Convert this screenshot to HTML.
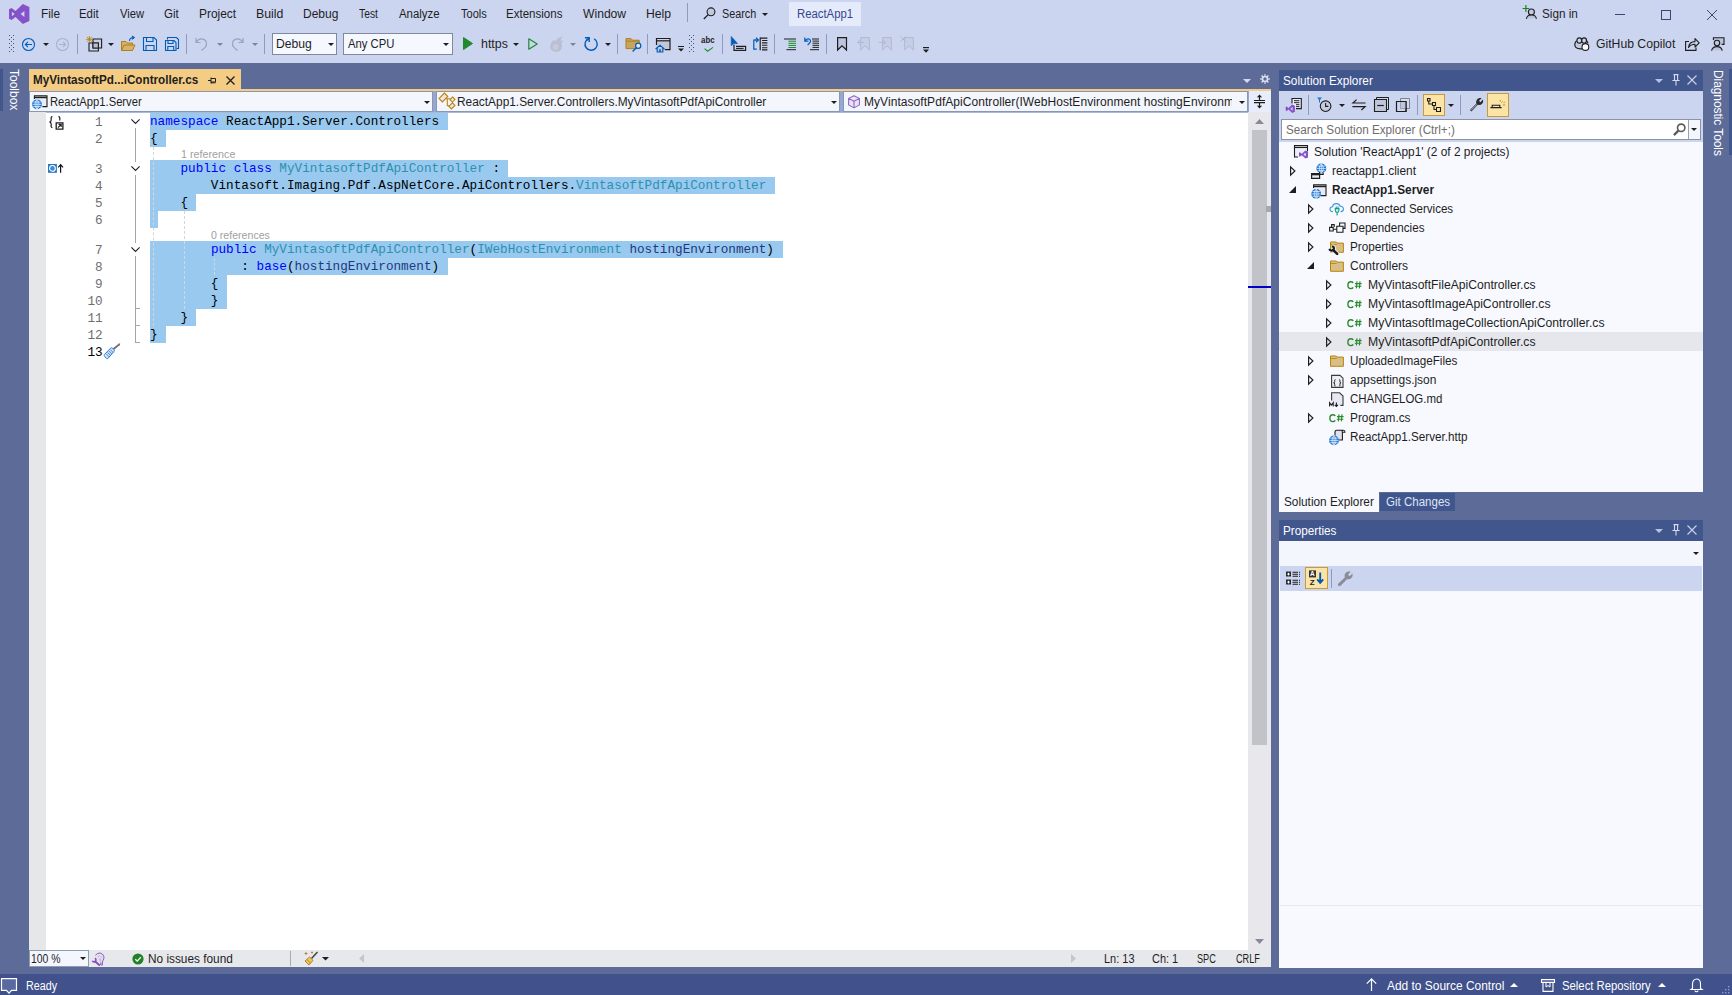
<!DOCTYPE html>
<html>
<head>
<meta charset="utf-8">
<title>ReactApp1</title>
<style>
*{box-sizing:border-box;margin:0;padding:0}
html,body{width:1732px;height:995px;overflow:hidden}
body{position:relative;background:#5d6b99;font-family:"Liberation Sans",sans-serif;font-size:12px;color:#1e1e1e}
.abs{position:absolute}
.t{position:absolute;white-space:pre;line-height:16px;height:16px}
svg{position:absolute;overflow:visible}
.kw{color:#0000ff}.ty{color:#2b91af}.pa{color:#1f377f}
.vt{position:absolute;writing-mode:vertical-rl;white-space:nowrap;color:#fff;font-size:12px;line-height:14px}
</style>
</head>
<body>
<div class="abs" style="left:0px;top:0px;width:1732px;height:63px;background:#ccd5f0;"></div>
<svg style="left:9px;top:4px" width="20.5" height="20" viewBox="0 0 20.5 20"><path d="M13.8 0 L20.4 2.9 V17.1 L13.8 20 L6.5 13 L2.6 16.1 L0 14.7 V5.3 L2.6 3.9 L6.5 7 Z M15.4 7.1 L11.6 10 L15.4 12.9 Z M2.9 7.8 V12.2 L5.7 10 Z" fill="#8652c9" fill-rule="evenodd"/></svg>
<div class="t" style="left:40.93px;top:6.0px;font-size:12px;color:#1e1e1e;transform:scaleX(0.9877);transform-origin:0 0;">File</div>
<div class="t" style="left:79.47px;top:6.0px;font-size:12px;color:#1e1e1e;transform:scaleX(0.9486);transform-origin:0 0;">Edit</div>
<div class="t" style="left:119.86px;top:6.0px;font-size:12px;color:#1e1e1e;transform:scaleX(0.9350);transform-origin:0 0;">View</div>
<div class="t" style="left:164.32px;top:6.0px;font-size:12px;color:#1e1e1e;transform:scaleX(0.9623);transform-origin:0 0;">Git</div>
<div class="t" style="left:198.92px;top:6.0px;font-size:12px;color:#1e1e1e;transform:scaleX(0.9948);transform-origin:0 0;">Project</div>
<div class="t" style="left:255.89px;top:6.0px;font-size:12px;color:#1e1e1e;transform:scaleX(1.0266);transform-origin:0 0;">Build</div>
<div class="t" style="left:302.92px;top:6.0px;font-size:12px;color:#1e1e1e;transform:scaleX(0.9996);transform-origin:0 0;">Debug</div>
<div class="t" style="left:358.67px;top:6.0px;font-size:12px;color:#1e1e1e;transform:scaleX(0.8587);transform-origin:0 0;">Test</div>
<div class="t" style="left:398.88px;top:6.0px;font-size:12px;color:#1e1e1e;transform:scaleX(0.9518);transform-origin:0 0;">Analyze</div>
<div class="t" style="left:460.66px;top:6.0px;font-size:12px;color:#1e1e1e;transform:scaleX(0.9190);transform-origin:0 0;">Tools</div>
<div class="t" style="left:505.95px;top:6.0px;font-size:12px;color:#1e1e1e;transform:scaleX(0.9618);transform-origin:0 0;">Extensions</div>
<div class="t" style="left:582.85px;top:6.0px;font-size:12px;color:#1e1e1e;transform:scaleX(1.0103);transform-origin:0 0;">Window</div>
<div class="t" style="left:645.90px;top:6.0px;font-size:12px;color:#1e1e1e;transform:scaleX(1.0169);transform-origin:0 0;">Help</div>
<div class="abs" style="left:687px;top:3px;width:1px;height:19px;background:#8e9bbc;"></div>
<svg style="left:703px;top:7px" width="13" height="13" viewBox="0 0 13 13"><circle cx="8" cy="4.8" r="3.9" fill="#c2c9e2" stroke="#1e1e1e" stroke-width="1.1"/><path d="M5.2 7.6 L0.8 12" stroke="#1e1e1e" stroke-width="1.3" fill="none"/></svg>
<div class="t" style="left:722.41px;top:6.0px;font-size:12px;color:#1e1e1e;transform:scaleX(0.9017);transform-origin:0 0;">Search</div>
<svg style="left:761.8px;top:12.6px" width="6" height="3.0" viewBox="0 0 6 3.0"><path d="M0 0H6 L3.0 3.0 Z" fill="#1e1e1e"/></svg>
<div class="abs" style="left:789px;top:2px;width:72px;height:24px;background:#e6ebfb;"></div>
<div class="t" style="left:797.47px;top:6.0px;font-size:12px;color:#33478f;transform:scaleX(0.9444);transform-origin:0 0;">ReactApp1</div>
<svg style="left:1522px;top:5px" width="15" height="15" viewBox="0 0 15 15"><circle cx="9.4" cy="7" r="3" fill="#c2c9e2" stroke="#1e1e1e" stroke-width="1.1"/><path d="M4.4 13.6 C4.8 11 6.6 10 9.4 10 S14 11 14.4 13.6 Z" fill="#bcc3dc"/><path d="M4.4 13.8 C4.8 11 6.6 10 9.4 10 S14 11 14.4 13.8" fill="none" stroke="#1e1e1e" stroke-width="1.1"/><path d="M3.9 0 V7 M0.6 3.5 H7.2" stroke="#15851f" stroke-width="1.2"/></svg>
<div class="t" style="left:1542.37px;top:6.0px;font-size:12px;color:#1e1e1e;transform:scaleX(0.9781);transform-origin:0 0;">Sign in</div>
<div class="abs" style="left:1615px;top:14px;width:10px;height:1px;background:#3c4478;"></div>
<div class="abs" style="left:1661px;top:10px;width:10px;height:10px;background:transparent;border:1px solid #3c4478;"></div>
<svg style="left:1707px;top:10px" width="10" height="10" viewBox="0 0 10 10"><path d="M0 0 L10 10 M10 0 L0 10" stroke="#3c4478" stroke-width="1" fill="none"/></svg>
<svg style="left:9px;top:35px" width="6" height="16" viewBox="0 0 6 16"><g fill="#47527a"><rect x="0" y="0" width="1" height="1"/><rect x="4" y="0" width="1" height="1"/><rect x="2" y="2" width="1" height="1"/><rect x="0" y="4" width="1" height="1"/><rect x="4" y="4" width="1" height="1"/><rect x="2" y="6" width="1" height="1"/><rect x="0" y="8" width="1" height="1"/><rect x="4" y="8" width="1" height="1"/><rect x="2" y="10" width="1" height="1"/><rect x="0" y="12" width="1" height="1"/><rect x="4" y="12" width="1" height="1"/><rect x="2" y="14" width="1" height="1"/><rect x="0" y="16" width="1" height="1"/><rect x="4" y="16" width="1" height="1"/></g></svg>
<svg style="left:22px;top:37.5px" width="13" height="13" viewBox="0 0 13 13"><circle cx="6.5" cy="6.5" r="6" fill="none" stroke="#005dba" stroke-width="1.1"/><path d="M10 6.5 H3.5 M6 3.8 L3.3 6.5 L6 9.2" fill="none" stroke="#005dba" stroke-width="1.1"/></svg>
<svg style="left:43px;top:43px" width="6" height="3.0" viewBox="0 0 6 3.0"><path d="M0 0H6 L3.0 3.0 Z" fill="#1e1e1e"/></svg>
<svg style="left:56px;top:37.5px" width="13" height="13" viewBox="0 0 13 13"><circle cx="6.5" cy="6.5" r="6" fill="none" stroke="#a9b1cc" stroke-width="1.1"/><path d="M3 6.5 H9.5 M7 3.8 L9.7 6.5 L7 9.2" fill="none" stroke="#a9b1cc" stroke-width="1.1"/></svg>
<div class="abs" style="left:77px;top:34px;width:1px;height:20px;background:#8e9bbc;"></div>
<svg style="left:86px;top:36px" width="16" height="16" viewBox="0 0 16 16"><path d="M7 3 H15.6 V12 H7 Z" fill="#c9cee0" stroke="#1e1e1e" stroke-width="1.1"/><path d="M3 7 H12.4 V15 H3 Z" fill="none" stroke="#1e1e1e" stroke-width="1.1"/><path d="M7 7 H12.4 V12 H7 Z" fill="#b9bfd4" stroke="#1e1e1e" stroke-width="1.1"/><path d="M3.4 0 V6.6 M0 3.3 H6.8 M1 0.9 L5.8 5.7 M5.8 0.9 L1 5.7" stroke="#b8860b" stroke-width="0.9"/></svg>
<svg style="left:108px;top:43px" width="6" height="3.0" viewBox="0 0 6 3.0"><path d="M0 0H6 L3.0 3.0 Z" fill="#1e1e1e"/></svg>
<svg style="left:121px;top:36px" width="16" height="16" viewBox="0 0 16 16"><path d="M0.5 14.5 V5.5 H5 L6.5 7 H11.5 V9" fill="#d8b265" stroke="#b07d1f"/><path d="M0.5 14.5 L3 9 H14 L11.5 14.5 Z" fill="#d8b265" stroke="#b07d1f"/><path d="M8.5 5 C8.5 2.5 10.5 1.5 13 1.5 M11 0 L13.2 1.5 L11 3.2" fill="none" stroke="#005dba" stroke-width="1.1"/></svg>
<svg style="left:143px;top:37px" width="14" height="14" viewBox="0 0 14 14"><path d="M0.5 0.5 H11 L13.5 3 V13.5 H0.5 Z" fill="none" stroke="#005dba" stroke-width="1.1"/><path d="M3.5 0.5 V4.5 H10 V0.5 M3 13.5 V8.5 H11 V13.5" fill="none" stroke="#005dba" stroke-width="1.1"/></svg>
<svg style="left:165px;top:37px" width="14" height="14" viewBox="0 0 14 14"><path d="M2.5 2.5 V0.5 H11.5 L13.5 2.5 V11.5 H11.5" fill="none" stroke="#005dba" stroke-width="1.1"/><path d="M0.5 3.5 H9 L11 5.5 V13.5 H0.5 Z" fill="none" stroke="#005dba" stroke-width="1.1"/><path d="M3 3.5 V6.5 H8 V3.5 M2.8 13.5 V9.5 H8.7 V13.5" fill="none" stroke="#005dba" stroke-width="1.1"/></svg>
<div class="abs" style="left:186px;top:34px;width:1px;height:20px;background:#8e9bbc;"></div>
<svg style="left:195px;top:37px" width="13" height="14" viewBox="0 0 13 14"><path d="M1 1 V5.5 H5.5 M1.2 5.3 C3 2.5 6 1.2 8.8 2.4 C12 3.8 12.4 8 10 10.4 L6.5 13.5" fill="none" stroke="#9ca2b8" stroke-width="1.2"/></svg>
<svg style="left:217px;top:43px" width="6" height="3.0" viewBox="0 0 6 3.0"><path d="M0 0H6 L3.0 3.0 Z" fill="#7d8398"/></svg>
<svg style="left:231px;top:37px" width="13" height="14" viewBox="0 0 13 14"><path d="M12 1 V5.5 H7.5 M11.8 5.3 C10 2.5 7 1.2 4.2 2.4 C1 3.8 0.6 8 3 10.4 L6.5 13.5" fill="none" stroke="#9ca2b8" stroke-width="1.2"/></svg>
<svg style="left:252px;top:43px" width="6" height="3.0" viewBox="0 0 6 3.0"><path d="M0 0H6 L3.0 3.0 Z" fill="#7d8398"/></svg>
<div class="abs" style="left:264px;top:34px;width:1px;height:20px;background:#8e9bbc;"></div>
<div class="abs" style="left:272px;top:33px;width:65px;height:22px;background:#f5f8fe;border:1px solid #7f889e;"></div>
<div class="t" style="left:275.90px;top:36.0px;font-size:12px;color:#1e1e1e;transform:scaleX(1.0145);transform-origin:0 0;">Debug</div>
<svg style="left:327.5px;top:43px" width="6" height="3.0" viewBox="0 0 6 3.0"><path d="M0 0H6 L3.0 3.0 Z" fill="#1e1e1e"/></svg>
<div class="abs" style="left:343px;top:33px;width:110px;height:22px;background:#f5f8fe;border:1px solid #7f889e;"></div>
<div class="t" style="left:348.38px;top:36.0px;font-size:12px;color:#1e1e1e;transform:scaleX(0.9420);transform-origin:0 0;">Any CPU</div>
<svg style="left:443px;top:43px" width="6" height="3.0" viewBox="0 0 6 3.0"><path d="M0 0H6 L3.0 3.0 Z" fill="#1e1e1e"/></svg>
<svg style="left:463px;top:37px" width="10" height="13" viewBox="0 0 10 13"><path d="M0.5 0.5 L9.5 6.5 L0.5 12.5 Z" fill="#1f8a2d" stroke="#1f8a2d" stroke-linejoin="round"/></svg>
<div class="t" style="left:480.54px;top:36.0px;font-size:12px;color:#1e1e1e;transform:scaleX(1.0341);transform-origin:0 0;">https</div>
<svg style="left:513px;top:43px" width="6" height="3.0" viewBox="0 0 6 3.0"><path d="M0 0H6 L3.0 3.0 Z" fill="#1e1e1e"/></svg>
<svg style="left:528px;top:38px" width="10" height="12" viewBox="0 0 10 12"><path d="M0.8 0.8 L9.2 6 L0.8 11.2 Z" fill="none" stroke="#1f8a2d" stroke-width="1.2" stroke-linejoin="round"/></svg>
<svg style="left:550px;top:36px" width="14" height="16" viewBox="0 0 14 16"><path d="M13.2 0.2 C10 0.6 6.5 3 5.5 5.5 C4.8 5 4.4 4.4 4.2 3.8 C1.8 5.6 0.2 8.2 0.2 10.8 C0.2 13.6 2.6 15.8 6 15.8 C9.6 15.8 12 13.4 12 10.4 C12 9 11.6 8 11.4 7 C12 6.4 12.8 5.4 13.4 4.2 C12.4 4.8 11.4 5 10.6 5 C10.6 3.2 11.6 1.4 13.2 0.2 Z" fill="#b9bed0"/><circle cx="5.6" cy="11" r="3" fill="#c6cade"/></svg>
<svg style="left:570px;top:43px" width="6" height="3.0" viewBox="0 0 6 3.0"><path d="M0 0H6 L3.0 3.0 Z" fill="#7d8398"/></svg>
<svg style="left:584px;top:37px" width="14" height="14" viewBox="0 0 14 14"><path d="M4.6 1.6 A6.1 6.1 0 1 0 10.2 1.9" fill="none" stroke="#005dba" stroke-width="1.4"/><path d="M0.9 0.7 H5.2 V5" fill="none" stroke="#005dba" stroke-width="1.4"/><path d="M5.2 0.7 L2.6 3.4" fill="none" stroke="#005dba" stroke-width="1.4"/></svg>
<svg style="left:605px;top:43px" width="6" height="3.0" viewBox="0 0 6 3.0"><path d="M0 0H6 L3.0 3.0 Z" fill="#1e1e1e"/></svg>
<div class="abs" style="left:617px;top:34px;width:1px;height:20px;background:#8e9bbc;"></div>
<svg style="left:625px;top:37px" width="17" height="15" viewBox="0 0 17 15"><path d="M1 1.6 H6 L7.4 3.2 H14.2 V11.6 H1 Z" fill="#c9a45c" stroke="#b07d1f" stroke-width="1"/><path d="M1 4.2 H14.2" stroke="#b07d1f" stroke-width="0.9"/><circle cx="13.2" cy="8.8" r="2.6" fill="#dfe6f8" stroke="#005dba" stroke-width="1.2"/><path d="M11.3 10.7 L7.6 14.4" stroke="#005dba" stroke-width="1.4"/></svg>
<div class="abs" style="left:647px;top:34px;width:1px;height:20px;background:#8e9bbc;"></div>
<svg style="left:655px;top:37px" width="16" height="16" viewBox="0 0 16 16"><path d="M1.5 4 H15 V12.6 H1.5 Z" fill="#c3c8d9"/><path d="M1.5 8 V1.5 H15 V12.6 H9.8" fill="none" stroke="#1e1e1e" stroke-width="1.2"/><path d="M1.5 3.8 H15" stroke="#1e1e1e" stroke-width="1.2"/><path d="M0.6 12 L5 8.2 L9.4 12 M2.2 11 V15 H7.8 V11" fill="#ccd5f0" stroke="#005dba" stroke-width="1.2"/><path d="M4.4 15 V12.6 H5.6 V15" fill="none" stroke="#005dba" stroke-width="0.9"/></svg>
<svg style="left:678px;top:46px" width="6" height="6" viewBox="0 0 6 6"><path d="M0 0.5 H6" stroke="#1e1e1e"/><path d="M0 2.5 H6 L3 5.5 Z" fill="#1e1e1e"/></svg>
<svg style="left:689px;top:35px" width="6" height="16" viewBox="0 0 6 16"><g fill="#47527a"><rect x="0" y="0" width="1" height="1"/><rect x="4" y="0" width="1" height="1"/><rect x="2" y="2" width="1" height="1"/><rect x="0" y="4" width="1" height="1"/><rect x="4" y="4" width="1" height="1"/><rect x="2" y="6" width="1" height="1"/><rect x="0" y="8" width="1" height="1"/><rect x="4" y="8" width="1" height="1"/><rect x="2" y="10" width="1" height="1"/><rect x="0" y="12" width="1" height="1"/><rect x="4" y="12" width="1" height="1"/><rect x="2" y="14" width="1" height="1"/><rect x="0" y="16" width="1" height="1"/><rect x="4" y="16" width="1" height="1"/></g></svg>
<div class="t" style="left:701.17px;top:32.0px;font-size:8.5px;color:#1e1e1e;transform:scaleX(0.9256);transform-origin:0 0;font-weight:bold;">abc</div>
<svg style="left:703.5px;top:46.5px" width="10" height="5" viewBox="0 0 10 5"><path d="M0.6 1.6 L3.6 4.2 L9 0.4" fill="none" stroke="#1f8a2d" stroke-width="1.1"/></svg>
<div class="abs" style="left:722px;top:34px;width:1px;height:20px;background:#8e9bbc;"></div>
<svg style="left:730px;top:36px" width="16" height="16" viewBox="0 0 16 16"><path d="M1.2 0.4 L1.2 9.8 L3.6 7.6 L7.6 7.6 Z" fill="#005dba" stroke="#005dba" stroke-width="0.6"/><path d="M4 8.4 V14.4 H15.6 V10.4 H6" fill="none" stroke="#1e1e1e" stroke-width="1.2"/><path d="M6 12.4 H13.6" stroke="#1e1e1e" stroke-width="1.1"/></svg>
<svg style="left:753px;top:36px" width="16" height="16" viewBox="0 0 16 16"><path d="M3.6 4 H0.8 V13.2 H3.8" fill="none" stroke="#005dba" stroke-width="1.2"/><path d="M1.4 4 H5 M3 1.8 L5.4 4 L3 6.2" fill="none" stroke="#005dba" stroke-width="1.2"/><path d="M7.2 1.6 V14.2" stroke="#1e1e1e" stroke-width="1.2"/><path d="M7.2 2.1 H14.4 M9 4.5 H14.4 M9 6.9 H14.4 M9 9.3 H14.4 M9 11.7 H14.4 M9 13.9 H14.4" fill="none" stroke="#1e1e1e" stroke-width="1.1"/></svg>
<div class="abs" style="left:774px;top:34px;width:1px;height:20px;background:#8e9bbc;"></div>
<svg style="left:784px;top:38px" width="12" height="13" viewBox="0 0 12 13"><path d="M0 1 H12 M2.4 11.7 H12" stroke="#1e1e1e" stroke-width="1"/><path d="M4.4 3.2 H12 M4.4 5.3 H12 M4.4 7.4 H12 M4.4 9.5 H12" stroke="#1f8a2d" stroke-width="1"/></svg>
<svg style="left:804px;top:37px" width="15" height="14" viewBox="0 0 15 14"><path d="M8 2 H15 M8.5 4.1 H15 M8.5 6.2 H15 M8.5 8.3 H15 M8.5 10.4 H15 M6 12.7 H15" stroke="#1e1e1e" stroke-width="1"/><path d="M0.8 0.6 V4.2 H4.4 M1 4 C2.4 1.4 5.6 1.2 6.4 3.4 C7 5.2 5.4 6.6 3.6 8" fill="none" stroke="#005dba" stroke-width="1.2"/></svg>
<div class="abs" style="left:826px;top:34px;width:1px;height:20px;background:#8e9bbc;"></div>
<svg style="left:837px;top:37px" width="10" height="14" viewBox="0 0 10 14"><path d="M0.6 0.6 H9.5 V13 L5 8.8 L0.6 13 Z" fill="#bcc3dc" stroke="#1e1e1e" stroke-width="1.2"/></svg>
<svg style="left:856px;top:37px" width="14" height="14" viewBox="0 0 14 14"><path d="M4.6 0.6 H13.4 V13 L9 8.8 L4.6 13 Z" fill="#c6cde6" stroke="#b3b9cf" stroke-width="1"/><path d="M8 5.4 H1.6 M3.8 3.2 L1.5 5.4 L3.8 7.6" fill="none" stroke="#b3b9cf" stroke-width="1"/></svg>
<svg style="left:877.7px;top:37px" width="14" height="14" viewBox="0 0 14 14"><path d="M4.6 0.6 H13.4 V13 L9 8.8 L4.6 13 Z" fill="#c6cde6" stroke="#b3b9cf" stroke-width="1"/><path d="M0.5 5.4 H7.4 M5.2 3.2 L7.5 5.4 L5.2 7.6" fill="none" stroke="#b3b9cf" stroke-width="1"/></svg>
<svg style="left:899.8px;top:37px" width="14" height="14" viewBox="0 0 14 14"><path d="M4.6 0.6 H13.4 V13 L9 8.8 L4.6 13 Z" fill="#c6cde6" stroke="#b3b9cf" stroke-width="1"/><path d="M0.6 -0.6 L5.6 4.6 M5.6 -0.6 L0.6 4.6" fill="none" stroke="#b3b9cf" stroke-width="1"/></svg>
<svg style="left:923px;top:47px" width="6" height="6" viewBox="0 0 6 6"><path d="M0 0.6 H6" stroke="#1e1e1e" stroke-width="1.2"/><path d="M0 2.6 H6 L3 5.8 Z" fill="#1e1e1e"/></svg>
<svg style="left:1574px;top:37px" width="16" height="15" viewBox="0 0 16 15"><path d="M2 4 C0.4 6 0.2 9 1.6 10.4 C3.2 11.8 6 12 8 11.8 L11 6 L12.4 4 Z" fill="#c2c9e2"/><rect x="3" y="0.8" width="4.6" height="5.4" rx="2.2" fill="#ccd5f0" stroke="#1e1e1e" stroke-width="1.2"/><rect x="7.8" y="0.8" width="4.6" height="5.4" rx="2.2" fill="#ccd5f0" stroke="#1e1e1e" stroke-width="1.2"/><path d="M2.6 3.6 C0.6 5.4 0.2 9 1.8 10.4 C3.4 11.8 6 12 8 11.8 M12.8 3.8 C13.4 4.6 13.8 5.4 13.9 6.2" fill="none" stroke="#1e1e1e" stroke-width="1.2"/><circle cx="11.4" cy="10" r="3.4" fill="#fff" stroke="#1e1e1e" stroke-width="1.1"/></svg>
<div class="t" style="left:1595.79px;top:36.0px;font-size:12px;color:#1e1e1e;transform:scaleX(1.0161);transform-origin:0 0;">GitHub Copilot</div>
<svg style="left:1685px;top:37px" width="15" height="14" viewBox="0 0 15 14"><path d="M4 4.5 H0.6 V13.4 H11 V10.5" fill="none" stroke="#1e1e1e" stroke-width="1.1"/><path d="M3.5 10.5 C4 6.5 6.5 4.6 10 4.6 V1.6 L14.2 5.8 L10 10 V7.2 C7.4 7.2 5 8 3.5 10.5 Z" fill="none" stroke="#1e1e1e" stroke-width="1.1" stroke-linejoin="round"/></svg>
<svg style="left:1710px;top:37px" width="15" height="14" viewBox="0 0 15 14"><path d="M3.4 0.8 H14 V7.4 H3.4 Z" fill="#bcc3dc"/><path d="M3.4 3 V0.8 H14 V7.4 H11.6" fill="none" stroke="#1e1e1e" stroke-width="1.1"/><circle cx="7" cy="6" r="2.7" fill="#c2c9e2" stroke="#1e1e1e" stroke-width="1.1"/><path d="M1.6 13.6 C2 10.6 4.2 9.6 7 9.6 S11.8 10.6 12.2 13.6 Z" fill="#bcc3dc"/><path d="M1.6 13.8 C2 10.6 4.2 9.6 7 9.6 S11.8 10.6 12.2 13.8" fill="none" stroke="#1e1e1e" stroke-width="1.1"/></svg>
<div class="abs" style="left:0px;top:69px;width:3px;height:42px;background:#40568d;"></div>
<div class="vt" style="left:6.5px;top:69px;width:14px;height:44px;letter-spacing:0px">Toolbox</div>
<div class="abs" style="left:29px;top:69px;width:212px;height:21px;background:#f5cc84;"></div>
<div class="abs" style="left:29px;top:89px;width:1242px;height:2px;background:#f5cc84;"></div>
<div class="t" style="left:33.13px;top:72.0px;font-size:12px;color:#1e1e1e;transform:scaleX(0.9737);transform-origin:0 0;font-weight:bold;">MyVintasoftPd...iController.cs</div>
<svg style="left:208px;top:76px" width="9" height="9" viewBox="0 0 9 9"><path d="M0 4.5 H3 M3 1.5 V7.5 M3 2.5 H7.5 V6 H3 M7.5 6.8 H3" fill="none" stroke="#1e1e1e" stroke-width="1"/></svg>
<svg style="left:226px;top:76px" width="9" height="9" viewBox="0 0 9 9"><path d="M0.5 0.5 L8.5 8.5 M8.5 0.5 L0.5 8.5" stroke="#1e1e1e" stroke-width="1.3" fill="none"/></svg>
<svg style="left:1243px;top:79px" width="8" height="4.0" viewBox="0 0 8 4.0"><path d="M0 0H8 L4.0 4.0 Z" fill="#d5dbee"/></svg>
<svg style="left:1260px;top:73.8px" width="10" height="10" viewBox="0 0 10 10"><circle cx="5" cy="5" r="2.5" fill="none" stroke="#dde2f2" stroke-width="1.6"/><g stroke="#dde2f2" stroke-width="1.4"><path d="M5 0.2 V1.8 M5 8.2 V9.8 M0.2 5 H1.8 M8.2 5 H9.8 M1.6 1.6 L2.8 2.8 M7.2 7.2 L8.4 8.4 M8.4 1.6 L7.2 2.8 M1.6 8.4 L2.8 7.2"/></g></svg>
<div class="abs" style="left:29px;top:91px;width:1242px;height:21px;background:#98a7d1;"></div>
<div class="abs" style="left:29px;top:91px;width:404px;height:21px;background:#f3f6fd;border:1px solid #8797b4;"></div>
<div class="abs" style="left:436px;top:91px;width:404px;height:21px;background:#f3f6fd;border:1px solid #8797b4;"></div>
<div class="abs" style="left:843px;top:91px;width:405px;height:21px;background:#f3f6fd;border:1px solid #8797b4;"></div>
<svg style="left:32px;top:94.5px" width="16" height="15" viewBox="0 0 16 15"><path d="M2.4 0.8 H15 V11.6 H2.4 Z" fill="#e9ecf6"/><path d="M2.4 4 V0.8 H15 V11.6 H10.4" fill="none" stroke="#1e1e1e" stroke-width="1.1"/><path d="M2.4 2.4 H15" stroke="#1e1e1e" stroke-width="1.6"/><g transform="translate(0,4.3)"><circle cx="5" cy="5" r="4.9" fill="#1671d2"/><path d="M0.4 5 H9.6 M5 0.3 V9.7 M1.2 2.7 H8.8 M1.2 7.3 H8.8 M5 0.3 C2.4 2.6 2.4 7.4 5 9.7 M5 0.3 C7.6 2.6 7.6 7.4 5 9.7" fill="none" stroke="#ffffff" stroke-width="0.7"/></g></svg>
<div class="t" style="left:50.48px;top:94.0px;font-size:12px;color:#1e1e1e;transform:scaleX(0.9352);transform-origin:0 0;">ReactApp1.Server</div>
<svg style="left:424px;top:100.5px" width="6" height="3.0" viewBox="0 0 6 3.0"><path d="M0 0H6 L3.0 3.0 Z" fill="#1e1e1e"/></svg>
<svg style="left:439px;top:92px" width="17" height="18" viewBox="0 0 17 18"><path d="M6.6 6.8 H11.9 M8.3 6.8 V13.7 H10.8" fill="none" stroke="#bb8316" stroke-width="1.1"/><path d="M5.4 1 L8.8 4.5 L3.4 9.9 L0 6.5 Z M13.5 5 L16 7.6 L13.3 10.1 L11 7.7 Z M13.5 10.8 L16 13.4 L12.4 17 L9.9 14.4 Z" fill="#ece7da" stroke="#bb8316" stroke-width="1.1" stroke-linejoin="miter"/></svg>
<div class="t" style="left:456.92px;top:94.0px;font-size:12px;color:#1e1e1e;transform:scaleX(0.9915);transform-origin:0 0;">ReactApp1.Server.Controllers.MyVintasoftPdfApiController</div>
<svg style="left:831px;top:100.5px" width="6" height="3.0" viewBox="0 0 6 3.0"><path d="M0 0H6 L3.0 3.0 Z" fill="#1e1e1e"/></svg>
<svg style="left:848px;top:94.5px" width="12" height="14" viewBox="0 0 12 14"><path d="M6 0.7 L11.4 3.4 V9.9 L6 12.9 L0.6 9.9 V3.4 Z" fill="#e9e4f4"/><path d="M6 0.7 L11.4 3.4 V9.9 L6 12.9 L0.6 9.9 V3.4 Z M0.6 3.4 L6 6.2 L11.4 3.4 M6 6.2 V12.9" fill="none" stroke="#8f60c7" stroke-width="1.05" stroke-linejoin="round"/></svg>
<div class="abs" style="left:864px;top:94px;width:368px;height:16px;overflow:hidden">
<div class="t" style="left:0.00px;top:0.0px;font-size:12px;color:#1e1e1e;letter-spacing:0.057px;">MyVintasoftPdfApiController(IWebHostEnvironment hostingEnvironment)</div>
</div>
<svg style="left:1239px;top:100.5px" width="6" height="3.0" viewBox="0 0 6 3.0"><path d="M0 0H6 L3.0 3.0 Z" fill="#1e1e1e"/></svg>
<div class="abs" style="left:1249px;top:91px;width:22px;height:21px;background:#e8edfb;"></div>
<svg style="left:1254px;top:95px" width="11" height="13" viewBox="0 0 11 13"><path d="M0 5.5 H11 M0 7.6 H11" fill="none" stroke="#1e1e1e" stroke-width="1.1"/><path d="M5.5 0.4 V5.5 M5.5 7.6 V12.6 M3.6 2.3 L5.5 0.4 L7.4 2.3 M3.6 10.7 L5.5 12.6 L7.4 10.7" fill="none" stroke="#1e1e1e" stroke-width="1.2"/></svg>
<div class="abs" style="left:29px;top:112px;width:1219px;height:838px;background:#ffffff;"></div>
<div class="abs" style="left:29px;top:112px;width:1242px;height:1px;background:#aab8dc;"></div>
<div class="abs" style="left:29px;top:112px;width:17px;height:838px;background:#e6e7e8;"></div>
<div class="abs" style="left:150px;top:113px;width:297.5px;height:17px;background:#99c9ef;"></div>
<div class="abs" style="left:150px;top:130px;width:15.6px;height:17px;background:#99c9ef;"></div>
<div class="abs" style="left:150px;top:160px;width:358.4px;height:17px;background:#99c9ef;"></div>
<div class="abs" style="left:150px;top:177px;width:625.0px;height:17px;background:#99c9ef;"></div>
<div class="abs" style="left:150px;top:194px;width:46.1px;height:17px;background:#99c9ef;"></div>
<div class="abs" style="left:150px;top:211px;width:8.0px;height:17px;background:#99c9ef;"></div>
<div class="abs" style="left:150px;top:241px;width:632.6px;height:17px;background:#99c9ef;"></div>
<div class="abs" style="left:150px;top:258px;width:297.5px;height:17px;background:#99c9ef;"></div>
<div class="abs" style="left:150px;top:275px;width:76.6px;height:17px;background:#99c9ef;"></div>
<div class="abs" style="left:150px;top:292px;width:76.6px;height:17px;background:#99c9ef;"></div>
<div class="abs" style="left:150px;top:309px;width:46.1px;height:17px;background:#99c9ef;"></div>
<div class="abs" style="left:150px;top:326px;width:15.6px;height:17px;background:#99c9ef;"></div>
<div class="abs" style="left:153px;top:147px;width:0;height:179px;border-left:1px dashed #d2d7dc"></div>
<div class="abs" style="left:184px;top:211px;width:0;height:98px;border-left:1px dashed #d2d7dc"></div>
<div class="abs" style="left:214px;top:258px;width:0;height:17px;border-left:1px dashed #d2d7dc"></div>
<div class="t" style="left:150px;top:113px;height:17px;line-height:17px;font-family:'Liberation Mono',monospace;font-size:12.67px;letter-spacing:0.014px;color:#000"><span class="kw">namespace</span> ReactApp1.Server.Controllers</div>
<div class="t" style="left:46px;width:56.7px;text-align:right;top:114px;height:17px;line-height:17px;font-family:'Liberation Mono',monospace;font-size:12.67px;letter-spacing:0.014px;color:#6e6e6e">1</div>
<div class="t" style="left:150px;top:130px;height:17px;line-height:17px;font-family:'Liberation Mono',monospace;font-size:12.67px;letter-spacing:0.014px;color:#000">{</div>
<div class="t" style="left:46px;width:56.7px;text-align:right;top:131px;height:17px;line-height:17px;font-family:'Liberation Mono',monospace;font-size:12.67px;letter-spacing:0.014px;color:#6e6e6e">2</div>
<div class="t" style="left:150px;top:160px;height:17px;line-height:17px;font-family:'Liberation Mono',monospace;font-size:12.67px;letter-spacing:0.014px;color:#000">    <span class="kw">public</span> <span class="kw">class</span> <span class="ty">MyVintasoftPdfApiController</span> :</div>
<div class="t" style="left:46px;width:56.7px;text-align:right;top:161px;height:17px;line-height:17px;font-family:'Liberation Mono',monospace;font-size:12.67px;letter-spacing:0.014px;color:#6e6e6e">3</div>
<div class="t" style="left:150px;top:177px;height:17px;line-height:17px;font-family:'Liberation Mono',monospace;font-size:12.67px;letter-spacing:0.014px;color:#000">        Vintasoft.Imaging.Pdf.AspNetCore.ApiControllers.<span class="ty">VintasoftPdfApiController</span></div>
<div class="t" style="left:46px;width:56.7px;text-align:right;top:178px;height:17px;line-height:17px;font-family:'Liberation Mono',monospace;font-size:12.67px;letter-spacing:0.014px;color:#6e6e6e">4</div>
<div class="t" style="left:150px;top:194px;height:17px;line-height:17px;font-family:'Liberation Mono',monospace;font-size:12.67px;letter-spacing:0.014px;color:#000">    {</div>
<div class="t" style="left:46px;width:56.7px;text-align:right;top:195px;height:17px;line-height:17px;font-family:'Liberation Mono',monospace;font-size:12.67px;letter-spacing:0.014px;color:#6e6e6e">5</div>
<div class="t" style="left:150px;top:211px;height:17px;line-height:17px;font-family:'Liberation Mono',monospace;font-size:12.67px;letter-spacing:0.014px;color:#000"></div>
<div class="t" style="left:46px;width:56.7px;text-align:right;top:212px;height:17px;line-height:17px;font-family:'Liberation Mono',monospace;font-size:12.67px;letter-spacing:0.014px;color:#6e6e6e">6</div>
<div class="t" style="left:150px;top:241px;height:17px;line-height:17px;font-family:'Liberation Mono',monospace;font-size:12.67px;letter-spacing:0.014px;color:#000">        <span class="kw">public</span> <span class="ty">MyVintasoftPdfApiController</span>(<span class="ty">IWebHostEnvironment</span> <span class="pa">hostingEnvironment</span>)</div>
<div class="t" style="left:46px;width:56.7px;text-align:right;top:242px;height:17px;line-height:17px;font-family:'Liberation Mono',monospace;font-size:12.67px;letter-spacing:0.014px;color:#6e6e6e">7</div>
<div class="t" style="left:150px;top:258px;height:17px;line-height:17px;font-family:'Liberation Mono',monospace;font-size:12.67px;letter-spacing:0.014px;color:#000">            : <span class="kw">base</span>(<span class="pa">hostingEnvironment</span>)</div>
<div class="t" style="left:46px;width:56.7px;text-align:right;top:259px;height:17px;line-height:17px;font-family:'Liberation Mono',monospace;font-size:12.67px;letter-spacing:0.014px;color:#6e6e6e">8</div>
<div class="t" style="left:150px;top:275px;height:17px;line-height:17px;font-family:'Liberation Mono',monospace;font-size:12.67px;letter-spacing:0.014px;color:#000">        {</div>
<div class="t" style="left:46px;width:56.7px;text-align:right;top:276px;height:17px;line-height:17px;font-family:'Liberation Mono',monospace;font-size:12.67px;letter-spacing:0.014px;color:#6e6e6e">9</div>
<div class="t" style="left:150px;top:292px;height:17px;line-height:17px;font-family:'Liberation Mono',monospace;font-size:12.67px;letter-spacing:0.014px;color:#000">        }</div>
<div class="t" style="left:46px;width:56.7px;text-align:right;top:293px;height:17px;line-height:17px;font-family:'Liberation Mono',monospace;font-size:12.67px;letter-spacing:0.014px;color:#6e6e6e">10</div>
<div class="t" style="left:150px;top:309px;height:17px;line-height:17px;font-family:'Liberation Mono',monospace;font-size:12.67px;letter-spacing:0.014px;color:#000">    }</div>
<div class="t" style="left:46px;width:56.7px;text-align:right;top:310px;height:17px;line-height:17px;font-family:'Liberation Mono',monospace;font-size:12.67px;letter-spacing:0.014px;color:#6e6e6e">11</div>
<div class="t" style="left:150px;top:326px;height:17px;line-height:17px;font-family:'Liberation Mono',monospace;font-size:12.67px;letter-spacing:0.014px;color:#000">}</div>
<div class="t" style="left:46px;width:56.7px;text-align:right;top:327px;height:17px;line-height:17px;font-family:'Liberation Mono',monospace;font-size:12.67px;letter-spacing:0.014px;color:#6e6e6e">12</div>
<div class="t" style="left:150px;top:343px;height:17px;line-height:17px;font-family:'Liberation Mono',monospace;font-size:12.67px;letter-spacing:0.014px;color:#000"></div>
<div class="t" style="left:46px;width:56.7px;text-align:right;top:344px;height:17px;line-height:17px;font-family:'Liberation Mono',monospace;font-size:12.67px;letter-spacing:0.014px;color:#000">13</div>
<div class="t" style="left:181.08px;top:146.0px;font-size:10.5px;color:#a0a0a0;transform:scaleX(1.0241);transform-origin:0 0;">1 reference</div>
<div class="t" style="left:211.49px;top:227.0px;font-size:10.5px;color:#a0a0a0;transform:scaleX(1.0090);transform-origin:0 0;">0 references</div>
<div class="abs" style="left:135px;top:128px;width:1px;height:215px;background:#a5a5a5;"></div>
<div class="abs" style="left:135px;top:308px;width:5px;height:1px;background:#a5a5a5;"></div>
<div class="abs" style="left:135px;top:325px;width:5px;height:1px;background:#a5a5a5;"></div>
<div class="abs" style="left:135px;top:342px;width:5px;height:1px;background:#a5a5a5;"></div>
<div class="abs" style="left:130px;top:115px;width:11px;height:13px;background:#ffffff;"></div>
<svg style="left:131px;top:119px" width="9" height="5" viewBox="0 0 9 5"><path d="M0.4 0.4 L4.5 4.4 L8.6 0.4" fill="none" stroke="#1e1e1e" stroke-width="1.1"/></svg>
<div class="abs" style="left:130px;top:162px;width:11px;height:13px;background:#ffffff;"></div>
<svg style="left:131px;top:166px" width="9" height="5" viewBox="0 0 9 5"><path d="M0.4 0.4 L4.5 4.4 L8.6 0.4" fill="none" stroke="#1e1e1e" stroke-width="1.1"/></svg>
<div class="abs" style="left:130px;top:243px;width:11px;height:13px;background:#ffffff;"></div>
<svg style="left:131px;top:247px" width="9" height="5" viewBox="0 0 9 5"><path d="M0.4 0.4 L4.5 4.4 L8.6 0.4" fill="none" stroke="#1e1e1e" stroke-width="1.1"/></svg>
<svg style="left:48.5px;top:116px" width="15" height="14" viewBox="0 0 15 14"><path d="M3.4 0.6 C1.6 0.6 2.2 2.4 2.2 4 C2.2 5.4 1.6 5.9 0.5 6.1 C1.6 6.3 2.2 6.8 2.2 8.2 C2.2 9.8 1.6 11.6 3.4 11.6" fill="none" stroke="#1e1e1e" stroke-width="1.2"/><path d="M9.4 0.6 C11.2 0.6 10.8 2.4 10.8 4.4" fill="none" stroke="#1e1e1e" stroke-width="1.2"/><path d="M7.2 6.8 H13.9 V13.2 H7.2 Z" fill="#fff" stroke="#1e1e1e" stroke-width="1.3"/><path d="M8.9 11.6 L12.1 8.5 M9.6 8.4 H12.2 V11" fill="none" stroke="#1e1e1e" stroke-width="1.1"/></svg>
<svg style="left:48px;top:164.2px" width="16" height="9" viewBox="0 0 16 9"><rect x="0" y="0" width="8.9" height="8.8" fill="#2877c6"/><circle cx="4.45" cy="4.4" r="2.9" fill="#3f8ad4" stroke="#fff" stroke-width="1.1"/><path d="M12.6 8.8 V0.9 M10.2 3.4 L12.6 0.7 L15 3.4" fill="none" stroke="#111" stroke-width="1.2"/></svg>
<svg style="left:104px;top:343px" width="16" height="16" viewBox="0 0 16 16"><path d="M8.4 7 L14.6 1.8" stroke="#6a6a6a" stroke-width="1.7" fill="none"/><path d="M13.6 0.9 L16.2 0.3 L15.6 2.9 Z" fill="#6a6a6a"/><path d="M0.6 11.3 L6.6 5.2 C7.2 4.6 8 4.6 8.6 5.2 L9.9 6.6 C10.5 7.2 10.5 8 9.9 8.6 L4.2 15.2 C3.6 15.8 2.8 15.8 2.2 15.2 L0.6 13.4 C0 12.8 0 11.9 0.6 11.3 Z" fill="#cfe2f7" stroke="#2b7bd0" stroke-width="1"/><path d="M2.2 10.8 L5 13.8 M3.6 9.4 L6.4 12.4 M5 8 L7.8 11 M6.4 6.6 L9 9.4" stroke="#2b7bd0" stroke-width="0.8"/></svg>
<div class="abs" style="left:1248px;top:112px;width:23px;height:838px;background:#e8e8ec;"></div>
<div class="abs" style="left:1252px;top:130px;width:15px;height:615px;background:#c2c3c9;"></div>
<svg style="left:1255px;top:119px" width="9" height="5" viewBox="0 0 9 5"><path d="M0 5 L4.5 0 L9 5 Z" fill="#868999"/></svg>
<svg style="left:1255px;top:939px" width="9" height="5" viewBox="0 0 9 5"><path d="M0 0 L4.5 5 L9 0 Z" fill="#868999"/></svg>
<div class="abs" style="left:1266px;top:206px;width:5px;height:6px;background:#a9a9a9;"></div>
<div class="abs" style="left:1248px;top:286px;width:23px;height:2px;background:#0000c8;"></div>
<div class="abs" style="left:29px;top:950px;width:1242px;height:17px;background:#e7e8ec;"></div>
<div class="abs" style="left:29px;top:950px;width:60px;height:17px;background:#f3f6fd;border:1px solid #8f9ab3;"></div>
<div class="t" style="left:31.41px;top:951.0px;font-size:12px;color:#1e1e1e;transform:scaleX(0.8658);transform-origin:0 0;">100 %</div>
<svg style="left:80px;top:957px" width="6" height="3.0" viewBox="0 0 6 3.0"><path d="M0 0H6 L3.0 3.0 Z" fill="#1e1e1e"/></svg>
<svg style="left:91px;top:952px" width="14" height="14" viewBox="0 0 14 14"><path d="M4.6 3.4 C5.4 1.6 7.6 0.8 9.6 1.2 C12 1.8 13.4 4 12.8 6.6 C12.5 8 11.6 8.8 11.4 10 V13 H9.8 V10.4" fill="#ddd0ee" fill-opacity="0.5" stroke="#8a5bbf" stroke-width="1"/><path d="M7.4 4.6 L8.4 4 M9.8 4.4 L10.6 4.8 M9 6.4 V9.4" stroke="#a98ad0" stroke-width="0.8" fill="none"/><path d="M3.9 6.3 A1.9 1.9 0 1 1 1.3 8.7" fill="none" stroke="#8450bd" stroke-width="1.6"/><path d="M4.3 9.5 L8.2 13" stroke="#8450bd" stroke-width="1.9" stroke-linecap="round"/></svg>
<svg style="left:131.6px;top:952.6px" width="12" height="12" viewBox="0 0 12 12"><circle cx="6" cy="6" r="5.6" fill="#1f8226"/><path d="M3.3 6.3 L5.2 8.1 L8.8 4.3" fill="none" stroke="#fff" stroke-width="1.3"/></svg>
<div class="t" style="left:147.93px;top:951.0px;font-size:12px;color:#1e1e1e;transform:scaleX(0.9858);transform-origin:0 0;">No issues found</div>
<div class="abs" style="left:290px;top:951px;width:1px;height:15px;background:#a7a9b5;"></div>
<svg style="left:304px;top:951px" width="15" height="15" viewBox="0 0 15 15"><path d="M13.5 1 L7.5 7.5" stroke="#444" stroke-width="1.5"/><path d="M5.6 6 L9 9.4 L5 14 L1 10 Z" fill="#f0c45a" stroke="#a87a1e" stroke-width="0.9"/><path d="M3 8.6 L6.4 12 M2 1 V4 M0.5 2.5 H3.5 M8 0.5 V2.5 M7 1.5 H9" stroke="#a87a1e" stroke-width="0.8"/></svg>
<svg style="left:322px;top:956.5px" width="7" height="3.5" viewBox="0 0 7 3.5"><path d="M0 0H7 L3.5 3.5 Z" fill="#1e1e1e"/></svg>
<svg style="left:359px;top:954px" width="5" height="9" viewBox="0 0 5 9"><path d="M5 0 L0 4.5 L5 9 Z" fill="#c5c6cc"/></svg>
<svg style="left:1071px;top:954px" width="5" height="9" viewBox="0 0 5 9"><path d="M0 0 L5 4.5 L0 9 Z" fill="#c5c6cc"/></svg>
<div class="t" style="left:1104.00px;top:951.0px;font-size:12px;color:#1e1e1e;transform:scaleX(0.9134);transform-origin:0 0;">Ln: 13</div>
<div class="t" style="left:1152.35px;top:951.0px;font-size:12px;color:#1e1e1e;transform:scaleX(0.9126);transform-origin:0 0;">Ch: 1</div>
<div class="t" style="left:1197.49px;top:951.0px;font-size:12px;color:#1e1e1e;transform:scaleX(0.7641);transform-origin:0 0;">SPC</div>
<div class="t" style="left:1236.44px;top:951.0px;font-size:12px;color:#1e1e1e;transform:scaleX(0.7633);transform-origin:0 0;">CRLF</div>
<div class="abs" style="left:1279px;top:70px;width:424px;height:21px;background:#40568d;"></div>
<div class="t" style="left:1283.37px;top:73.0px;font-size:12px;color:#ffffff;transform:scaleX(0.9829);transform-origin:0 0;">Solution Explorer</div>
<svg style="left:1655px;top:79px" width="8" height="4.0" viewBox="0 0 8 4.0"><path d="M0 0H8 L4.0 4.0 Z" fill="#b8c2e0"/></svg>
<svg style="left:1672px;top:74px" width="8" height="12" viewBox="0 0 8 12"><path d="M1.5 0.6 H6.5 M2.5 0.6 V6.4 M5.6 0.6 V6.4 M0.4 6.5 H7.6 M4 6.5 V11.5" fill="none" stroke="#d5dbee" stroke-width="1.1"/></svg>
<svg style="left:1687px;top:75px" width="10" height="10" viewBox="0 0 10 10"><path d="M0.5 0.5 L9.5 9.5 M9.5 0.5 L0.5 9.5" stroke="#c9d0e8" stroke-width="1.15" fill="none"/></svg>
<div class="abs" style="left:1279px;top:91px;width:424px;height:28px;background:#ccd5f0;"></div>
<div class="abs" style="left:1279px;top:119px;width:424px;height:23px;background:#ccd5f0;"></div>
<svg style="left:1285px;top:96px" width="17" height="17" viewBox="0 0 17 17"><path d="M7 7.5 V2.5 H16.3 V12.6 H11" fill="#e9edf9" stroke="#1e1e1e" stroke-width="1.1"/><path d="M9 4.7 H14.4 M9 6.7 H14.4 M11 8.7 H14.4 M11 10.6 H14.4" stroke="#1e1e1e" stroke-width="1"/><path d="M7.2 8.6 L9.9 9.8 V15.8 L7.2 17 L3.6 13.6 L1.6 15.1 L0.7 14.6 V11 L1.6 10.5 L3.6 12 Z M7.6 10.9 L5.3 12.8 L7.6 14.7 Z" fill="#8652c9" fill-rule="evenodd"/></svg>
<div class="abs" style="left:1308px;top:95px;width:1px;height:20px;background:#8e9bbc;"></div>
<svg style="left:1317px;top:97px" width="15" height="15" viewBox="0 0 15 15"><circle cx="8.6" cy="9.2" r="5.3" fill="#c6cce0" stroke="#1e1e1e" stroke-width="1.1"/><path d="M8.6 6 V9.4 H11.4" fill="none" stroke="#1e1e1e" stroke-width="1.1"/><path d="M0 0.4 H5 L2.5 3.6 Z" fill="#1b75d0"/><path d="M2.5 3 V5.5" stroke="#1b75d0" stroke-width="1"/></svg>
<svg style="left:1339px;top:104px" width="6" height="3.0" viewBox="0 0 6 3.0"><path d="M0 0H6 L3.0 3.0 Z" fill="#1e1e1e"/></svg>
<svg style="left:1352px;top:99px" width="14" height="11" viewBox="0 0 14 11"><path d="M13.6 4 H0.9 L4.6 0.6 M0.4 7.6 H13.1 L9.4 11" fill="none" stroke="#1e1e1e" stroke-width="1.2" stroke-linejoin="miter"/></svg>
<svg style="left:1374px;top:97px" width="15" height="15" viewBox="0 0 15 15"><path d="M2.5 2.5 V0.5 H14.5 V12.5 H12.5" fill="#d5dbee" stroke="#1e1e1e" stroke-width="1"/><path d="M0.5 2.5 H12.5 V14.5 H0.5 Z" fill="#bfc6dc" stroke="#1e1e1e" stroke-width="1.1"/><path d="M3.2 8.5 H9.8" stroke="#1e1e1e" stroke-width="1.2"/></svg>
<svg style="left:1396px;top:97px" width="15" height="15" viewBox="0 0 15 15"><path d="M4.5 1.5 H13.5 V11.5 H4.5 Z" fill="#d5dbee" stroke="#7d8398" stroke-width="1"/><path d="M0.5 4.5 H10 V14.5 H0.5 Z" fill="none" stroke="#1e1e1e" stroke-width="1.1"/><path d="M4.5 4.5 H10 V11.5 H4.5 Z" fill="#bfc6dc"/><path d="M0.5 4.5 H10 V14.5 H0.5 Z" fill="none" stroke="#1e1e1e" stroke-width="1.1"/></svg>
<div class="abs" style="left:1417px;top:95px;width:1px;height:20px;background:#8e9bbc;"></div>
<div class="abs" style="left:1423px;top:94px;width:22px;height:22px;background:#fce4a6;border:1px solid #c79a3a;"></div>
<svg style="left:1427px;top:98px" width="14" height="14" viewBox="0 0 14 14"><path d="M0.5 0.5 H3 V3 H0.5 Z M5.5 4.5 H8.5 V7.5 H5.5 Z M9.5 9.5 H13.5 V13.5 H9.5 Z" fill="#fce4a6" stroke="#1e1e1e" stroke-width="1.1"/><path d="M1.8 3 V6 H5.5 M7 7.5 V11.5 H9.5" fill="none" stroke="#1e1e1e" stroke-width="1.1"/></svg>
<svg style="left:1448px;top:104px" width="6" height="3.0" viewBox="0 0 6 3.0"><path d="M0 0H6 L3.0 3.0 Z" fill="#1e1e1e"/></svg>
<div class="abs" style="left:1460px;top:95px;width:1px;height:20px;background:#8e9bbc;"></div>
<svg style="left:1469px;top:97px" width="15" height="15" viewBox="0 0 15 15"><path d="M1 13 L7.4 6.6 C6.6 4.4 7.6 2 9.8 1.2 C10.8 0.8 11.8 0.8 12.6 1.2 L10 3.8 L11.4 5.2 L14 2.6 C14.6 4.4 14 6.4 12.2 7.4 C11 8 9.8 8 8.8 7.8 L2.4 14.4 Z" fill="#2b2b2b"/><path d="M2.2 13.1 L7.8 7.5" stroke="#ccd5f0" stroke-width="0.9"/></svg>
<div class="abs" style="left:1487px;top:93px;width:22px;height:24px;background:#fce4a6;border:1px solid #c79a3a;"></div>
<svg style="left:1490px;top:98px" width="17" height="12" viewBox="0 0 17 12"><path d="M0.4 9.6 H11.6 M2.2 9.4 V7.2 H9.8 V9.4" fill="none" stroke="#1e1e1e" stroke-width="1.1"/><path d="M11.4 4.6 L12.6 3.4 M13 7 H15.2 M10.2 2 V3.6 M13.6 4.8 L14.8 4.2" stroke="#c58a18" stroke-width="1"/></svg>
<div class="abs" style="left:1281px;top:119px;width:420px;height:21px;background:#ffffff;border:1px solid #8b93a8;"></div>
<div class="abs" style="left:1689px;top:120px;width:11px;height:19px;background:#f3f6fd;"></div>
<div class="t" style="left:1286.37px;top:122.0px;font-size:12px;color:#6d6d6d;transform:scaleX(0.9757);transform-origin:0 0;">Search Solution Explorer (Ctrl+;)</div>
<svg style="left:1673px;top:123px" width="13" height="13" viewBox="0 0 13 13"><circle cx="8.2" cy="4.8" r="3.7" fill="none" stroke="#5a5a5a" stroke-width="1.6"/><path d="M5.4 7.6 L0.9 12.1" stroke="#5a5a5a" stroke-width="2.2" fill="none"/></svg>
<div class="abs" style="left:1688px;top:120px;width:1px;height:19px;background:#9aa0b0;"></div>
<svg style="left:1691px;top:128px" width="6" height="3.0" viewBox="0 0 6 3.0"><path d="M0 0H6 L3.0 3.0 Z" fill="#1e1e1e"/></svg>
<div class="abs" style="left:1279px;top:142px;width:424px;height:350px;background:#f7f9fe;"></div>
<div class="abs" style="left:1279px;top:332px;width:424px;height:19px;background:#e6e7ed;"></div>
<svg style="left:1294px;top:144px" width="16" height="16" viewBox="0 0 16 16"><path d="M0.5 1.5 H13.5 V13 H0.5 Z" fill="#eceff8"/><path d="M4 13 H0.5 V1.5 H13.5 V7" fill="none" stroke="#1e1e1e" stroke-width="1.1"/><path d="M0.5 3.4 H13.5" stroke="#1e1e1e" stroke-width="1.3"/><path d="M11.4 6.4 L14 7.5 V13.4 L11.4 14.5 L7.8 11.2 L5.9 12.6 L5 12.2 V8.7 L5.9 8.3 L7.8 9.7 Z M11.7 8.7 L9.4 10.45 L11.7 12.2 Z" fill="#8652c9" fill-rule="evenodd"/></svg>
<div class="t" style="left:1314.37px;top:144.0px;font-size:12px;color:#1e1e1e;transform:scaleX(0.9900);transform-origin:0 0;">Solution &#x27;ReactApp1&#x27; (2 of 2 projects)</div>
<svg style="left:1290px;top:165.5px" width="6" height="10" viewBox="0 0 6 10"><path d="M0.6 0.9 L4.9 5 L0.6 9.1 Z" fill="none" stroke="#1e1e1e" stroke-width="1.2" stroke-linejoin="miter"/></svg>
<svg style="left:1311px;top:163px" width="16" height="16" viewBox="0 0 16 16"><g transform="translate(5.3,0.4)"><circle cx="5" cy="5" r="4.9" fill="#1671d2"/><path d="M0.4 5 H9.6 M5 0.3 V9.7 M1.2 2.7 H8.8 M1.2 7.3 H8.8 M5 0.3 C2.4 2.6 2.4 7.4 5 9.7 M5 0.3 C7.6 2.6 7.6 7.4 5 9.7" fill="none" stroke="#ffffff" stroke-width="0.7"/></g><path d="M8.6 9 V11.4 H12.2 V9.8" fill="none" stroke="#1e1e1e" stroke-width="1.1"/><path d="M0.6 10.6 H8.6 V15.4 H0.6 Z" fill="#e6e9f2" stroke="#1e1e1e" stroke-width="1.2"/><path d="M0.6 11.5 H8.6" stroke="#1e1e1e" stroke-width="1.6"/></svg>
<div class="t" style="left:1332.12px;top:163.0px;font-size:12px;color:#1e1e1e;transform:scaleX(0.9911);transform-origin:0 0;">reactapp1.client</div>
<svg style="left:1289px;top:186.0px" width="7" height="7" viewBox="0 0 7 7"><path d="M7 0 V7 H0 Z" fill="#1e1e1e"/></svg>
<svg style="left:1311px;top:182px" width="16" height="16" viewBox="0 0 16 16"><path d="M2.6 2.8 H15 V13.6 H2.6 Z" fill="#e6e9f2"/><path d="M2.6 6 V2.8 H15 V13.6 H10" fill="none" stroke="#1e1e1e" stroke-width="1.1"/><path d="M2.6 4.4 H15" stroke="#1e1e1e" stroke-width="1.6"/><g transform="translate(0.2,6.9)"><circle cx="5" cy="5" r="4.9" fill="#1671d2"/><path d="M0.4 5 H9.6 M5 0.3 V9.7 M1.2 2.7 H8.8 M1.2 7.3 H8.8 M5 0.3 C2.4 2.6 2.4 7.4 5 9.7 M5 0.3 C7.6 2.6 7.6 7.4 5 9.7" fill="none" stroke="#ffffff" stroke-width="0.7"/></g></svg>
<div class="t" style="left:1332.12px;top:182.0px;font-size:12px;color:#1e1e1e;transform:scaleX(0.9871);transform-origin:0 0;font-weight:bold;">ReactApp1.Server</div>
<svg style="left:1308px;top:203.5px" width="6" height="10" viewBox="0 0 6 10"><path d="M0.6 0.9 L4.9 5 L0.6 9.1 Z" fill="none" stroke="#1e1e1e" stroke-width="1.2" stroke-linejoin="miter"/></svg>
<svg style="left:1329px;top:201px" width="16" height="16" viewBox="0 0 16 16"><path d="M4 10.6 C2 10.6 0.8 9.4 1 7.8 C1.2 6.4 2.4 5.6 3.6 5.8 C3.8 3.8 5.4 2.6 7.4 2.6 C9.2 2.6 10.6 3.6 11.2 5.2 C13 5 14.4 6.2 14.4 7.9 C14.4 9.5 13.2 10.6 11.6 10.6" fill="none" stroke="#3b94dc" stroke-width="1.1"/><path d="M6.3 7.6 H9.9 V9.6 C9.9 10.8 9.1 11.4 8.1 11.4 S6.3 10.8 6.3 9.6 Z" fill="#d9f2ee" stroke="#0f9d86" stroke-width="1.1"/><path d="M8.1 11.4 V14.6 M7.2 5.6 V7.6 M9 5.6 V7.6" fill="none" stroke="#0f9d86" stroke-width="1.1"/></svg>
<div class="t" style="left:1350.32px;top:201.0px;font-size:12px;color:#1e1e1e;transform:scaleX(0.9600);transform-origin:0 0;">Connected Services</div>
<svg style="left:1308px;top:222.5px" width="6" height="10" viewBox="0 0 6 10"><path d="M0.6 0.9 L4.9 5 L0.6 9.1 Z" fill="none" stroke="#1e1e1e" stroke-width="1.2" stroke-linejoin="miter"/></svg>
<svg style="left:1329px;top:220px" width="17" height="16" viewBox="0 0 17 16"><path d="M0.6 7.4 H4.2 V11 H0.6 Z M2.6 7.4 V4.6 H5.2 V7 M4.2 9.2 H7.8" fill="none" stroke="#1e1e1e" stroke-width="1.1"/><path d="M10.6 3 H16 V8.4 H10.6 Z" fill="#f7f9fe" stroke="#1e1e1e" stroke-width="1.1"/><path d="M7.8 6.2 H14 V12.2 H7.8 Z" fill="#f7f9fe" stroke="#1e1e1e" stroke-width="1.1"/></svg>
<div class="t" style="left:1349.94px;top:220.0px;font-size:12px;color:#1e1e1e;transform:scaleX(0.9706);transform-origin:0 0;">Dependencies</div>
<svg style="left:1308px;top:241.5px" width="6" height="10" viewBox="0 0 6 10"><path d="M0.6 0.9 L4.9 5 L0.6 9.1 Z" fill="none" stroke="#1e1e1e" stroke-width="1.2" stroke-linejoin="miter"/></svg>
<svg style="left:1329px;top:239.8px" width="16" height="16" viewBox="0 0 16 16"><g transform="translate(1,0)"><path d="M0.5 2 H6.3 L7.4 3.1 H13.4 V12.3 H0.5 Z" fill="#d7bf86" stroke="#bb8410" stroke-width="1"/><path d="M0.5 4.5 H6.4 L7.4 3.5" fill="none" stroke="#bb8410" stroke-width="0.9"/></g><path d="M3.08 6.23 A2.2 2.2 0 1 1 0.53 8.78" fill="none" stroke="#f7f9fe" stroke-width="3.8"/><path d="M4.2 10 L8.3 14" stroke="#f7f9fe" stroke-width="4" stroke-linecap="round"/><path d="M3.08 6.23 A2.2 2.2 0 1 1 0.53 8.78" fill="none" stroke="#1a1a1a" stroke-width="2.2"/><path d="M4.2 10 L8.2 13.9" stroke="#1a1a1a" stroke-width="2.5" stroke-linecap="round"/></svg>
<div class="t" style="left:1349.94px;top:239.0px;font-size:12px;color:#1e1e1e;transform:scaleX(0.9779);transform-origin:0 0;">Properties</div>
<svg style="left:1307px;top:262.0px" width="7" height="7" viewBox="0 0 7 7"><path d="M7 0 V7 H0 Z" fill="#1e1e1e"/></svg>
<svg style="left:1330px;top:258.8px" width="16" height="16" viewBox="0 0 16 16"><path d="M0.5 2 H6.3 L7.4 3.1 H13.4 V12.3 H0.5 Z" fill="#d7bf86" stroke="#bb8410" stroke-width="1"/><path d="M0.5 4.5 H6.4 L7.4 3.5" fill="none" stroke="#bb8410" stroke-width="0.9"/></svg>
<div class="t" style="left:1350.30px;top:258.0px;font-size:12px;color:#1e1e1e;transform:scaleX(1.0020);transform-origin:0 0;">Controllers</div>
<svg style="left:1326px;top:279.5px" width="6" height="10" viewBox="0 0 6 10"><path d="M0.6 0.9 L4.9 5 L0.6 9.1 Z" fill="none" stroke="#1e1e1e" stroke-width="1.2" stroke-linejoin="miter"/></svg>
<svg style="left:1347px;top:279px" width="16" height="14" viewBox="0 0 16 14"><path d="M6.3 3.9 C5.6 3.1 4.8 2.8 3.9 2.8 C2.1 2.8 0.9 4.2 0.9 6.2 C0.9 8.2 2.1 9.6 3.9 9.6 C4.8 9.6 5.6 9.3 6.3 8.6" fill="none" stroke="#2a8a2a" stroke-width="1.4"/><path d="M10 2.4 L9.4 9.4 M13 2.4 L12.4 9.4 M8 4.6 H14.6 M7.8 7.2 H14.4" stroke="#2a8a2a" stroke-width="1.15" fill="none"/></svg>
<div class="t" style="left:1367.91px;top:277.0px;font-size:12px;color:#1e1e1e;transform:scaleX(1.0102);transform-origin:0 0;">MyVintasoftFileApiController.cs</div>
<svg style="left:1326px;top:298.5px" width="6" height="10" viewBox="0 0 6 10"><path d="M0.6 0.9 L4.9 5 L0.6 9.1 Z" fill="none" stroke="#1e1e1e" stroke-width="1.2" stroke-linejoin="miter"/></svg>
<svg style="left:1347px;top:298px" width="16" height="14" viewBox="0 0 16 14"><path d="M6.3 3.9 C5.6 3.1 4.8 2.8 3.9 2.8 C2.1 2.8 0.9 4.2 0.9 6.2 C0.9 8.2 2.1 9.6 3.9 9.6 C4.8 9.6 5.6 9.3 6.3 8.6" fill="none" stroke="#2a8a2a" stroke-width="1.4"/><path d="M10 2.4 L9.4 9.4 M13 2.4 L12.4 9.4 M8 4.6 H14.6 M7.8 7.2 H14.4" stroke="#2a8a2a" stroke-width="1.15" fill="none"/></svg>
<div class="t" style="left:1367.90px;top:296.0px;font-size:12px;color:#1e1e1e;transform:scaleX(1.0149);transform-origin:0 0;">MyVintasoftImageApiController.cs</div>
<svg style="left:1326px;top:317.5px" width="6" height="10" viewBox="0 0 6 10"><path d="M0.6 0.9 L4.9 5 L0.6 9.1 Z" fill="none" stroke="#1e1e1e" stroke-width="1.2" stroke-linejoin="miter"/></svg>
<svg style="left:1347px;top:317px" width="16" height="14" viewBox="0 0 16 14"><path d="M6.3 3.9 C5.6 3.1 4.8 2.8 3.9 2.8 C2.1 2.8 0.9 4.2 0.9 6.2 C0.9 8.2 2.1 9.6 3.9 9.6 C4.8 9.6 5.6 9.3 6.3 8.6" fill="none" stroke="#2a8a2a" stroke-width="1.4"/><path d="M10 2.4 L9.4 9.4 M13 2.4 L12.4 9.4 M8 4.6 H14.6 M7.8 7.2 H14.4" stroke="#2a8a2a" stroke-width="1.15" fill="none"/></svg>
<div class="t" style="left:1367.90px;top:315.0px;font-size:12px;color:#1e1e1e;transform:scaleX(1.0171);transform-origin:0 0;">MyVintasoftImageCollectionApiController.cs</div>
<svg style="left:1326px;top:336.5px" width="6" height="10" viewBox="0 0 6 10"><path d="M0.6 0.9 L4.9 5 L0.6 9.1 Z" fill="none" stroke="#1e1e1e" stroke-width="1.2" stroke-linejoin="miter"/></svg>
<svg style="left:1347px;top:336px" width="16" height="14" viewBox="0 0 16 14"><path d="M6.3 3.9 C5.6 3.1 4.8 2.8 3.9 2.8 C2.1 2.8 0.9 4.2 0.9 6.2 C0.9 8.2 2.1 9.6 3.9 9.6 C4.8 9.6 5.6 9.3 6.3 8.6" fill="none" stroke="#2a8a2a" stroke-width="1.4"/><path d="M10 2.4 L9.4 9.4 M13 2.4 L12.4 9.4 M8 4.6 H14.6 M7.8 7.2 H14.4" stroke="#2a8a2a" stroke-width="1.15" fill="none"/></svg>
<div class="t" style="left:1367.90px;top:334.0px;font-size:12px;color:#1e1e1e;transform:scaleX(1.0184);transform-origin:0 0;">MyVintasoftPdfApiController.cs</div>
<svg style="left:1308px;top:355.5px" width="6" height="10" viewBox="0 0 6 10"><path d="M0.6 0.9 L4.9 5 L0.6 9.1 Z" fill="none" stroke="#1e1e1e" stroke-width="1.2" stroke-linejoin="miter"/></svg>
<svg style="left:1330px;top:353.8px" width="16" height="16" viewBox="0 0 16 16"><path d="M0.5 2 H6.3 L7.4 3.1 H13.4 V12.3 H0.5 Z" fill="#d7bf86" stroke="#bb8410" stroke-width="1"/><path d="M0.5 4.5 H6.4 L7.4 3.5" fill="none" stroke="#bb8410" stroke-width="0.9"/></svg>
<div class="t" style="left:1350.00px;top:353.0px;font-size:12px;color:#1e1e1e;transform:scaleX(0.9760);transform-origin:0 0;">UploadedImageFiles</div>
<svg style="left:1308px;top:374.5px" width="6" height="10" viewBox="0 0 6 10"><path d="M0.6 0.9 L4.9 5 L0.6 9.1 Z" fill="none" stroke="#1e1e1e" stroke-width="1.2" stroke-linejoin="miter"/></svg>
<svg style="left:1329px;top:372px" width="16" height="16" viewBox="0 0 16 16"><path d="M2.6 3.4 H11 L14 6.2 V15.4 H2.6 Z" fill="#eceef5" stroke="#3a3a3a" stroke-width="1.1"/><path d="M6.4 7.6 C5.4 7.6 5.7 8.8 5.7 9.6 C5.7 10.4 5.2 10.7 4.6 10.8 C5.2 10.9 5.7 11.2 5.7 12 C5.7 12.8 5.4 14 6.4 14 M10.2 7.6 C11.2 7.6 10.9 8.8 10.9 9.6 C10.9 10.4 11.4 10.7 12 10.8 C11.4 10.9 10.9 11.2 10.9 12 C10.9 12.8 11.2 14 10.2 14" fill="none" stroke="#1e1e1e" stroke-width="1"/></svg>
<div class="t" style="left:1350.40px;top:372.0px;font-size:12px;color:#1e1e1e;transform:scaleX(0.9959);transform-origin:0 0;">appsettings.json</div>
<svg style="left:1329px;top:391px" width="16" height="16" viewBox="0 0 16 16"><path d="M2.6 1.8 H10.6 L14 5 V14.4 H2.6 Z" fill="#e6e9f1"/><path d="M2.6 9.6 V1.8 H10.6 L14 5 V14.4 H11.4" fill="none" stroke="#3a3a3a" stroke-width="1.1"/><path d="M0.6 15.6 V11.6 L2.4 14 L4.2 11.6 V15.6 M7.4 11.4 V15.4 M5.8 13.8 L7.4 15.5 L9 13.8" fill="none" stroke="#1e1e1e" stroke-width="1.1"/></svg>
<div class="t" style="left:1350.33px;top:391.0px;font-size:12px;color:#1e1e1e;transform:scaleX(0.9558);transform-origin:0 0;">CHANGELOG.md</div>
<svg style="left:1308px;top:412.5px" width="6" height="10" viewBox="0 0 6 10"><path d="M0.6 0.9 L4.9 5 L0.6 9.1 Z" fill="none" stroke="#1e1e1e" stroke-width="1.2" stroke-linejoin="miter"/></svg>
<svg style="left:1329px;top:412px" width="16" height="14" viewBox="0 0 16 14"><path d="M6.3 3.9 C5.6 3.1 4.8 2.8 3.9 2.8 C2.1 2.8 0.9 4.2 0.9 6.2 C0.9 8.2 2.1 9.6 3.9 9.6 C4.8 9.6 5.6 9.3 6.3 8.6" fill="none" stroke="#2a8a2a" stroke-width="1.4"/><path d="M10 2.4 L9.4 9.4 M13 2.4 L12.4 9.4 M8 4.6 H14.6 M7.8 7.2 H14.4" stroke="#2a8a2a" stroke-width="1.15" fill="none"/></svg>
<div class="t" style="left:1349.93px;top:410.0px;font-size:12px;color:#1e1e1e;transform:scaleX(0.9862);transform-origin:0 0;">Program.cs</div>
<svg style="left:1329px;top:429px" width="17" height="17" viewBox="0 0 17 17"><path d="M6 1.2 H13.6 V11 H6 Z" fill="#dfe2ec"/><path d="M6 6.4 V3 C6 1.8 6.8 1.2 7.8 1.2 H14.4 C15.6 1.2 16 2 16 3.2 H13.4 V11 H9.6 M13.4 3.2 C13.4 2 13 1.2 12 1.2" fill="none" stroke="#1e1e1e" stroke-width="1.1"/><g transform="translate(0,6.4)"><circle cx="5" cy="5" r="4.9" fill="#1671d2"/><path d="M0.4 5 H9.6 M5 0.3 V9.7 M1.2 2.7 H8.8 M1.2 7.3 H8.8 M5 0.3 C2.4 2.6 2.4 7.4 5 9.7 M5 0.3 C7.6 2.6 7.6 7.4 5 9.7" fill="none" stroke="#ffffff" stroke-width="0.7"/></g></svg>
<div class="t" style="left:1349.94px;top:429.0px;font-size:12px;color:#1e1e1e;transform:scaleX(0.9735);transform-origin:0 0;">ReactApp1.Server.http</div>
<div class="abs" style="left:1279px;top:492px;width:100px;height:20px;background:#f7f9fe;"></div>
<div class="t" style="left:1284.37px;top:494.0px;font-size:12px;color:#1e1e1e;transform:scaleX(0.9829);transform-origin:0 0;">Solution Explorer</div>
<div class="abs" style="left:1380px;top:493px;width:75px;height:18px;background:#40568d;"></div>
<div class="t" style="left:1386.32px;top:494.0px;font-size:12px;color:#dfe5f6;transform:scaleX(0.9608);transform-origin:0 0;">Git Changes</div>
<div class="abs" style="left:1279px;top:520px;width:424px;height:21px;background:#40568d;"></div>
<div class="t" style="left:1282.94px;top:523.0px;font-size:12px;color:#ffffff;transform:scaleX(0.9779);transform-origin:0 0;">Properties</div>
<svg style="left:1655px;top:529px" width="8" height="4.0" viewBox="0 0 8 4.0"><path d="M0 0H8 L4.0 4.0 Z" fill="#b8c2e0"/></svg>
<svg style="left:1672px;top:524px" width="8" height="12" viewBox="0 0 8 12"><path d="M1.5 0.6 H6.5 M2.5 0.6 V6.4 M5.6 0.6 V6.4 M0.4 6.5 H7.6 M4 6.5 V11.5" fill="none" stroke="#d5dbee" stroke-width="1.1"/></svg>
<svg style="left:1687px;top:525px" width="10" height="10" viewBox="0 0 10 10"><path d="M0.5 0.5 L9.5 9.5 M9.5 0.5 L0.5 9.5" stroke="#c9d0e8" stroke-width="1.15" fill="none"/></svg>
<div class="abs" style="left:1279px;top:541px;width:424px;height:427px;background:#f7f9fe;"></div>
<div class="abs" style="left:1279px;top:541px;width:424px;height:25px;background:#f3f6fd;"></div>
<svg style="left:1693px;top:552px" width="6" height="3.0" viewBox="0 0 6 3.0"><path d="M0 0H6 L3.0 3.0 Z" fill="#1e1e1e"/></svg>
<div class="abs" style="left:1280px;top:566px;width:422px;height:25px;background:#ccd5f0;"></div>
<svg style="left:1285px;top:570px" width="16" height="16" viewBox="0 0 16 16"><path d="M1 1.6 H6 V6.6 H1 Z M1 9.6 H6 V14.6 H1 Z" fill="#2b2b2b"/><path d="M2.2 4.1 H4.8 M3.5 2.8 V5.4 M2.2 12.1 H4.8 M3.5 10.8 V13.4" stroke="#fff" stroke-width="1"/><path d="M7.5 2.2 H13 M7.5 4.2 H13 M7.5 6.2 H13 M7.5 10.2 H13 M7.5 12.2 H13 M7.5 14.2 H13" stroke="#1e1e1e" stroke-width="1.1"/><path d="M14 2.2 H15 M14 4.2 H15 M14 6.2 H15 M14 10.2 H15 M14 12.2 H15 M14 14.2 H15" stroke="#1e1e1e" stroke-width="1.1"/></svg>
<div class="abs" style="left:1305px;top:567px;width:23px;height:22px;background:#fce4a6;border:1px solid #c79a3a;"></div>
<svg style="left:1309px;top:570px" width="16" height="16" viewBox="0 0 16 16"><rect x="0" y="0.4" width="7" height="7" fill="#333"/><text x="0.9" y="6.4" font-family="Liberation Sans" font-size="6.5" font-weight="bold" fill="#fff">A</text><text x="0.8" y="14.6" font-family="Liberation Sans" font-size="8" font-weight="bold" fill="#1e1e1e">Z</text><path d="M11.2 2.6 V12.4 M8.2 9.4 L11.2 12.8 L14.2 9.4" fill="none" stroke="#0057b8" stroke-width="1.9"/></svg>
<div class="abs" style="left:1331px;top:569px;width:1px;height:19px;background:#8e9bbc;"></div>
<svg style="left:1338px;top:571px" width="15" height="15" viewBox="0 0 15 15"><path d="M0.4 12.6 L6.8 6.4 C6 4.2 7 1.6 9.4 0.8 C10.6 0.4 11.8 0.4 12.8 0.8 L10 3.6 L11.6 5.2 L14.4 2.4 C15 4.4 14.4 6.6 12.4 7.8 C11.2 8.4 10 8.4 9 8.2 L2.6 14.8 C1.8 15.4 0.8 15.2 0.3 14.6 C-0.2 14 -0.1 13.2 0.4 12.6 Z" fill="#8a8c96"/></svg>
<div class="abs" style="left:1280px;top:905px;width:422px;height:1px;background:#e4e8f3;"></div>
<div class="abs" style="left:1729px;top:69px;width:3px;height:86px;background:#40568d;"></div>
<div class="vt" style="left:1711px;top:70px;width:14px;height:90px;letter-spacing:-0.08px">Diagnostic Tools</div>
<div class="abs" style="left:0px;top:974px;width:1732px;height:21px;background:#40518c;"></div>
<svg style="left:0px;top:977px" width="18" height="17" viewBox="0 0 18 17"><path d="M1.5 1.6 H16.5 V13.4 H11.6 L9 16.2 L6.4 13.4 H1.5 Z" fill="#5a6aa0" stroke="#ffffff" stroke-width="1.2"/></svg>
<div class="t" style="left:25.52px;top:978.0px;font-size:12px;color:#ffffff;transform:scaleX(0.8936);transform-origin:0 0;">Ready</div>
<svg style="left:1366px;top:978px" width="11" height="13" viewBox="0 0 11 13"><path d="M5.5 13 V1 M0.8 5.6 L5.5 0.8 L10.2 5.6" fill="none" stroke="#ffffff" stroke-width="1.2"/></svg>
<div class="t" style="left:1386.88px;top:978.0px;font-size:12px;color:#ffffff;transform:scaleX(0.9944);transform-origin:0 0;">Add to Source Control</div>
<svg style="left:1509.5px;top:983px" width="8" height="4" viewBox="0 0 8 4"><path d="M0 4 L4 0 L8 4 Z" fill="#fff"/></svg>
<svg style="left:1541px;top:979px" width="14" height="13" viewBox="0 0 14 13"><path d="M0.5 0.6 H13.5 V3.4 H0.5 Z M2 3.4 V12.4 H12 V3.4" fill="none" stroke="#ffffff" stroke-width="1.1"/><path d="M5 3.6 V8 L7 6.6 L9 8 V3.6" fill="none" stroke="#ffffff" stroke-width="1"/></svg>
<div class="t" style="left:1562.39px;top:978.0px;font-size:12px;color:#ffffff;transform:scaleX(0.9424);transform-origin:0 0;">Select Repository</div>
<svg style="left:1658px;top:983px" width="8" height="4" viewBox="0 0 8 4"><path d="M0 4 L4 0 L8 4 Z" fill="#fff"/></svg>
<svg style="left:1690px;top:978px" width="13" height="14" viewBox="0 0 13 14"><path d="M2.5 10.5 V6 C2.5 3 4.3 1 6.5 1 S10.5 3 10.5 6 V10.5 L12 11.5 H1 Z M5 12.5 C5 13.4 5.7 13.8 6.5 13.8 S8 13.4 8 12.5" fill="none" stroke="#ffffff" stroke-width="1.1"/></svg>
<svg style="left:1722px;top:986px" width="8" height="8" viewBox="0 0 8 8"><g fill="#8f9cc4"><rect x="6" y="0" width="1.4" height="1.4"/><rect x="3" y="3" width="1.4" height="1.4"/><rect x="6" y="3" width="1.4" height="1.4"/><rect x="0" y="6" width="1.4" height="1.4"/><rect x="3" y="6" width="1.4" height="1.4"/><rect x="6" y="6" width="1.4" height="1.4"/></g></svg>
</body>
</html>
